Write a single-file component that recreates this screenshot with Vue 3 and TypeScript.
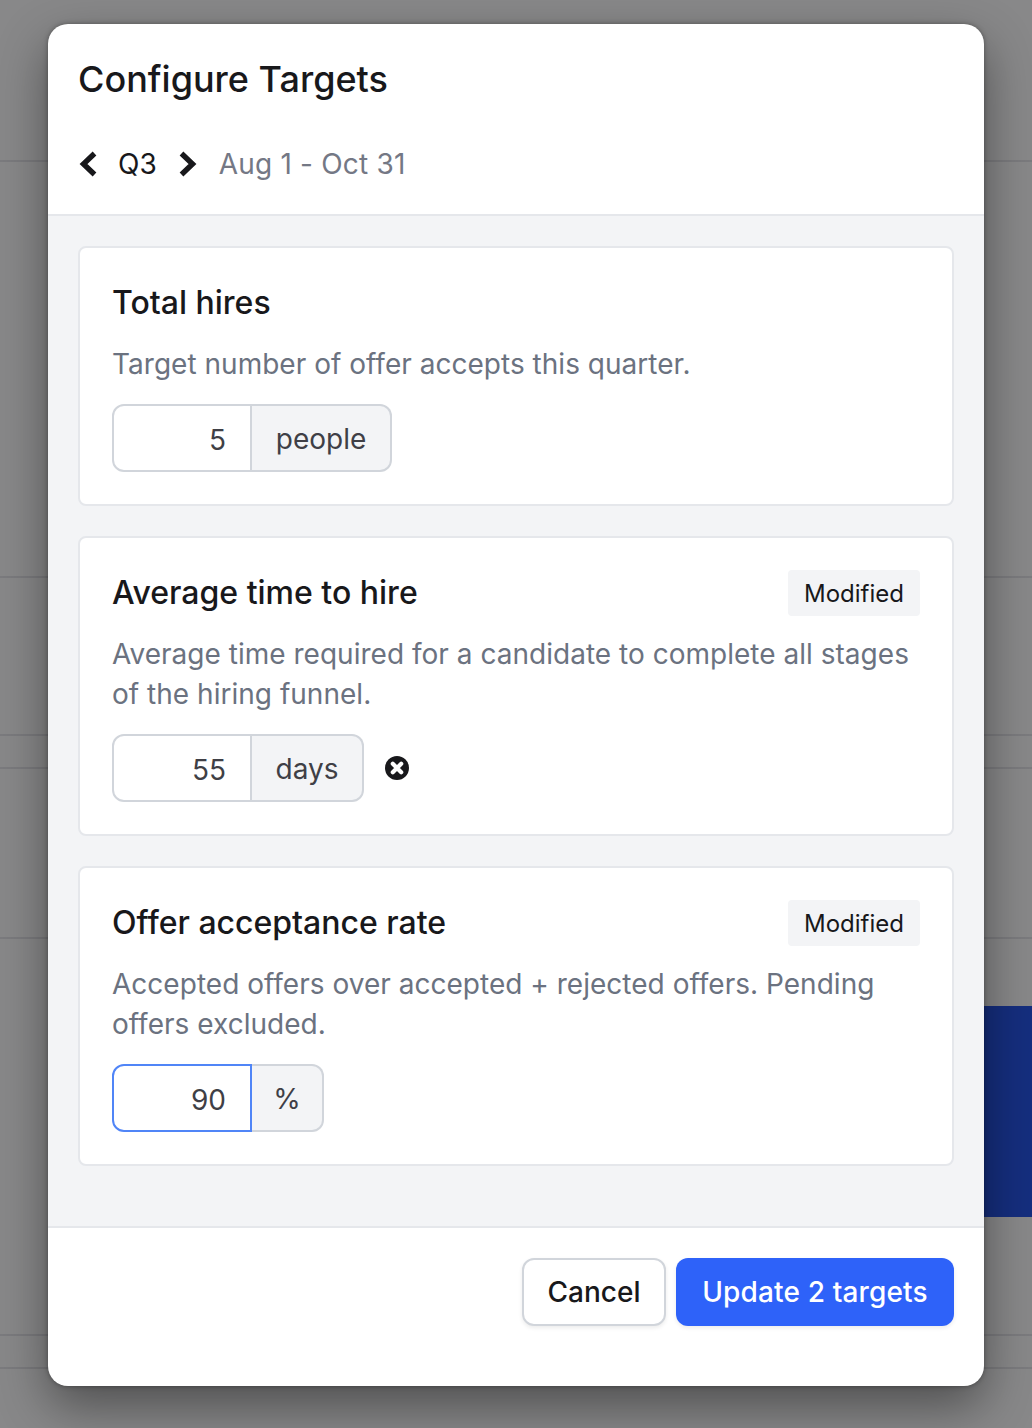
<script setup lang="ts">
interface BackdropRow { height: number; block?: { top: number; height: number } }
interface Target {
  title: string
  description: string
  value: string
  unit: string
  unitWidth: number
  modified: boolean
  focused: boolean
}

const rows: BackdropRow[] = [
  { height: 162 },
  { height: 416 },
  { height: 158 },
  { height: 33 },
  { height: 170 },
  { height: 397, block: { top: 67, height: 211 } },
  { height: 33 },
]

const targets: Target[] = [
  { title: 'Total hires', description: 'Target number of offer accepts this quarter.', value: '5', unit: 'people', unitWidth: 140, modified: false, focused: false },
  { title: 'Average time to hire', description: 'Average time required for a candidate to complete all stages of the hiring funnel.', value: '55', unit: 'days', unitWidth: 112, modified: true, focused: false },
  { title: 'Offer acceptance rate', description: 'Accepted offers over accepted + rejected offers. Pending offers excluded.', value: '90', unit: '%', unitWidth: 72, modified: true, focused: true },
]
</script>

<template>
  <div class="page">
    <div class="backdrop">
      <div v-for="(row, i) in rows" :key="i" class="bg-row" :style="{ height: row.height + 'px' }">
        <div v-if="row.block" class="bg-block" :style="{ marginTop: row.block.top + 'px', height: row.block.height + 'px' }"></div>
      </div>
    </div>

    <section class="modal">
      <header class="head">
        <h1 class="title">Configure Targets</h1>
        <div class="nav">
          <svg class="chev" width="18" height="26" viewBox="0 0 18 26" aria-hidden="true">
            <path d="M15.5 2.5 L4.5 13 L15.5 23.5" fill="none" stroke="#18181b" stroke-width="5.4" />
          </svg>
          <span class="quarter">Q3</span>
          <svg class="chev" width="18" height="26" viewBox="0 0 18 26" aria-hidden="true">
            <path d="M2.5 2.5 L13.5 13 L2.5 23.5" fill="none" stroke="#18181b" stroke-width="5.4" />
          </svg>
          <span class="dates">Aug 1 - Oct 31</span>
        </div>
      </header>

      <div class="body">
        <article v-for="t in targets" :key="t.title" class="card">
          <div class="card-head">
            <h2 class="card-title">{{ t.title }}</h2>
            <span v-if="t.modified" class="badge">Modified</span>
          </div>
          <p class="desc">{{ t.description }}</p>
          <div class="field">
            <div class="group">
              <div class="input" :class="{ focus: t.focused }">{{ t.value }}</div>
              <div class="unit" :style="{ width: t.unitWidth + 'px' }">{{ t.unit }}</div>
            </div>
            <svg v-if="t.modified && !t.focused" class="clear" width="24" height="24" viewBox="0 0 24 24" aria-hidden="true">
              <circle cx="12" cy="12" r="12" fill="#18181b" />
              <path d="M7.8 7.8 L16.2 16.2 M16.2 7.8 L7.8 16.2" stroke="#fff" stroke-width="4.2" stroke-linecap="round" />
            </svg>
          </div>
        </article>
      </div>

      <footer class="foot">
        <button class="btn cancel" type="button">Cancel</button>
        <button class="btn primary" type="button">Update 2 targets</button>
      </footer>
    </section>
  </div>
</template>

<style>
html, body { margin: 0; background: #888889; }
</style>

<style scoped>
.page {
  position: relative;
  width: 1032px;
  height: 1428px;
  overflow: hidden;
  background: #888889;
  font-family: Inter, "Liberation Sans", sans-serif;
}
.bg-row {
  box-sizing: border-box;
  border-bottom: 2px solid #7b7b7e;
  display: flow-root;
}
.bg-block {
  margin-left: 960px;
  background: #152e7e;
}
.modal {
  position: absolute;
  left: 48px;
  top: 24px;
  width: 936px;
  height: 1362px;
  display: flex;
  flex-direction: column;
  background: #fff;
  border-radius: 20px;
  overflow: hidden;
  box-shadow: 0 0 5px rgba(0, 0, 0, 0.35), 0 20px 50px rgba(0, 0, 0, 0.42);
}
.head {
  box-sizing: border-box;
  height: 192px;
  padding: 32px 30px 0;
  border-bottom: 2px solid #e5e7eb;
}
.title {
  margin: 0;
  font-size: 36px;
  line-height: 46px;
  font-weight: 500;
  color: #18181b;
}
.nav {
  display: flex;
  align-items: center;
  gap: 22px;
  margin-top: 42px;
  margin-left: 1px;
  height: 40px;
  font-size: 28px;
}
.quarter { color: #18181b; margin-left: -1px; }
.dates { color: #747885; letter-spacing: 0.2px; }
.chev { flex: none; }
.body {
  flex: 1;
  display: flex;
  flex-direction: column;
  gap: 30px;
  padding: 30px;
  background: #f3f4f6;
}
.card {
  box-sizing: border-box;
  padding: 32px;
  background: #fff;
  border: 2px solid #e5e7eb;
  border-radius: 8px;
}
.card-head {
  display: flex;
  justify-content: space-between;
  align-items: center;
  min-height: 46px;
}
.card-title {
  margin: 0;
  font-size: 32px;
  line-height: 46px;
  font-weight: 500;
  color: #18181b;
}
.badge {
  box-sizing: border-box;
  height: 46px;
  padding: 0 16px;
  display: flex;
  align-items: center;
  font-size: 24px;
  color: #18181b;
  background: #f3f4f6;
  border-radius: 4px;
}
.desc {
  margin: 18px 0 0;
  font-size: 28px;
  line-height: 40px;
  letter-spacing: 0.02px;
  color: #6b7280;
}
.field {
  display: flex;
  align-items: center;
  gap: 21px;
  margin-top: 20px;
}
.group {
  display: flex;
  height: 68px;
}
.input {
  box-sizing: border-box;
  width: 140px;
  height: 68px;
  padding: 4px 24px 0;
  display: flex;
  align-items: center;
  justify-content: flex-end;
  font-size: 28px;
  color: #3f3f46;
  background: #fff;
  border: 2px solid #d1d5db;
  border-radius: 12px 0 0 12px;
}
.input.focus { border-color: #5085f7; }
.unit {
  box-sizing: border-box;
  height: 68px;
  padding: 2px 0 0;
  display: flex;
  align-items: center;
  justify-content: center;
  font-size: 28px;
  color: #3f3f46;
  background: #f3f4f6;
  border: 2px solid #d1d5db;
  border-left: 0;
  border-radius: 0 12px 12px 0;
}
.clear { flex: none; }
.foot {
  box-sizing: border-box;
  height: 160px;
  padding: 30px 30px 0;
  display: flex;
  justify-content: flex-end;
  align-items: flex-start;
  gap: 10px;
  border-top: 2px solid #e5e7eb;
}
.btn {
  box-sizing: border-box;
  height: 68px;
  padding: 0;
  font-family: inherit;
  font-size: 28px;
  font-weight: 500;
  border-radius: 12px;
  box-shadow: 0 2px 4px rgba(0, 0, 0, 0.08);
}
.cancel {
  width: 144px;
  color: #18181b;
  background: #fff;
  border: 2px solid #d1d5db;
}
.primary {
  width: 278px;
  letter-spacing: 0.15px;
  color: #fff;
  background: #2e62f9;
  border: 0;
}
</style>
